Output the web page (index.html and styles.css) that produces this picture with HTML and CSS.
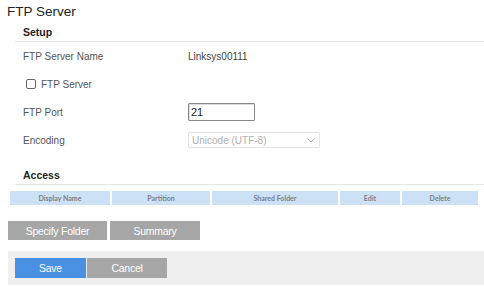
FILE: index.html
```html
<!DOCTYPE html>
<html>
<head>
<meta charset="utf-8">
<link rel="stylesheet" href="styles.css">
</head>
<body>
<div class="page">
  <h1 class="title">FTP Server</h1>
  <section class="section">
    <h2 class="section-head">Setup</h2>
    <div class="row">
      <span class="label">FTP Server Name</span>
      <span class="value">Linksys00111</span>
    </div>
    <div class="row">
      <label class="check"><span class="box"></span><span>FTP Server</span></label>
    </div>
    <div class="row">
      <span class="label">FTP Port</span>
      <input class="text-input" type="text" value="21">
    </div>
    <div class="row">
      <span class="label">Encoding</span>
      <div class="select">
        <span>Unicode (UTF-8)</span>
        <svg class="chev" width="8" height="5" viewBox="0 0 8 5"><path d="M0.5 0.5 L4 4 L7.5 0.5" fill="none" stroke="#b5b5b5" stroke-width="1"/></svg>
      </div>
    </div>
  </section>
  <section class="section access">
    <h2 class="section-head">Access</h2>
  </section>
  <div class="grid-head">
    <div class="th">Display Name</div>
    <div class="th">Partition</div>
    <div class="th">Shared Folder</div>
    <div class="th">Edit</div>
    <div class="th">Delete</div>
  </div>
  <div class="actions">
    <button class="btn btn-wide">Specify Folder</button>
    <button class="btn btn-mid">Summary</button>
  </div>
  <div class="footer">
    <button class="btn btn-save">Save</button>
    <button class="btn btn-cancel">Cancel</button>
  </div>
</div>
</body>
</html>
```
FILE: styles.css
```css
html, body {
  margin: 0;
  padding: 0;
  background: #fff;
}
body {
  font-family: "Liberation Sans", Arial, sans-serif;
  color: #444;
}
.page {
  width: 484px;
}
.title {
  margin: 0;
  padding-left: 7px;
  font-size: 13.5px;
  font-weight: normal;
  line-height: 23px;
  color: #222;
}
.section {
  margin-left: 15px;
}
.section-head {
  margin: 0;
  padding-left: 8px;
  height: 18px;
  line-height: 18px;
  font-size: 10.5px;
  font-weight: bold;
  color: #222;
  border-bottom: 1px solid #e2e6ea;
}
.access {
  margin-top: 12px;
}
.row {
  display: flex;
  align-items: center;
  height: 28px;
  padding-left: 8px;
  font-size: 10px;
  color: #555;
}
.label {
  width: 165px;
}
.value {
  color: #444;
}
.check {
  display: flex;
  align-items: center;
  gap: 5px;
  padding-left: 3px;
}
.box {
  width: 8px;
  height: 8px;
  border: 1px solid #666;
  border-radius: 2px;
  background: #fff;
}
.text-input {
  box-sizing: border-box;
  width: 67px;
  height: 18px;
  margin: 0;
  padding: 0 2px;
  border: 1px solid #888;
  border-radius: 1px;
  box-shadow: inset 1px 1px 1px rgba(0,0,0,0.15);
  font-family: "Liberation Sans", Arial, sans-serif;
  font-size: 11px;
  color: #222;
}
.select {
  box-sizing: border-box;
  width: 132px;
  height: 16px;
  display: flex;
  align-items: center;
  justify-content: space-between;
  padding: 0 4px 0 3px;
  border: 1px solid #e4e4e4;
  border-radius: 2px;
  font-size: 10px;
  color: #b0b0b0;
}
.grid-head {
  display: grid;
  grid-template-columns: 100px 98px 126px 60px 76px;
  column-gap: 2px;
  margin: 6px 0 0 10px;
}
.th {
  height: 14px;
  line-height: 14px;
  background: #cde1f6;
  text-align: center;
  font-family: Lato, "Liberation Sans", sans-serif;
  font-size: 7px;
  font-weight: bold;
  color: #7a7f86;
}
.actions {
  display: flex;
  gap: 3px;
  margin: 16px 0 0 8px;
}
.btn {
  border: none;
  margin: 0;
  padding: 0;
  color: #fff;
  font-family: "Liberation Sans", Arial, sans-serif;
  font-size: 10.5px;
  letter-spacing: -0.25px;
  cursor: pointer;
}
.btn-wide {
  width: 99px;
  height: 19px;
  background: #a6a6a6;
}
.btn-mid {
  width: 90px;
  height: 19px;
  background: #a6a6a6;
}
.footer {
  display: flex;
  gap: 1px;
  margin: 11px 0 0 8px;
  padding: 7px 7px;
  height: 20px;
  background: #efefef;
}
.btn-save {
  width: 71px;
  height: 20px;
  background: #4a90e2;
}
.btn-cancel {
  width: 80px;
  height: 20px;
  background: #a6a6a6;
}
```
